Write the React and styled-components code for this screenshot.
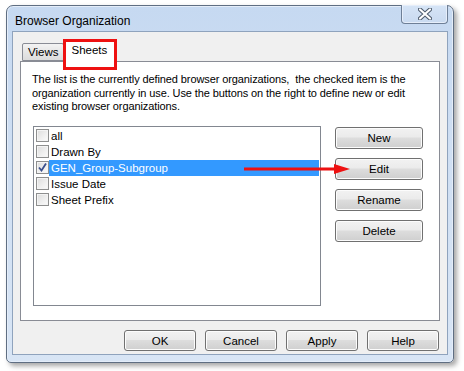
import styled, { createGlobalStyle } from "styled-components";

const GlobalStyle = createGlobalStyle`
  html, body {
    margin: 0;
    padding: 0;
    background: #ffffff;
  }
  body {
    font-family: "Liberation Sans", Arial, sans-serif;
    font-size: 11px;
    color: #000;
  }
`;

const Page = styled.div`
  width: 464px;
  height: 371px;
  padding: 5px 0 0 6px;
  box-sizing: border-box;
`;

const Window = styled.div`
  width: 448px;
  height: 358px;
  box-sizing: border-box;
  border: 1px solid #5f6e82;
  border-radius: 7px 7px 5px 5px;
  background: linear-gradient(180deg, #c6d9f1 0%, #cfdff3 40%, #d8e5f5 100%);
  box-shadow: inset 0 0 0 1px #e4edf9, 3px 3px 5px rgba(0, 0, 0, 0.35);
  display: flex;
  flex-direction: column;
  padding: 0 5px 7px 5px;
`;

const TitleBar = styled.div`
  height: 26px;
  display: flex;
  align-items: flex-start;
  justify-content: space-between;
`;

const Title = styled.div`
  font-size: 12px;
  padding: 8px 0 0 3px;
  color: #000;
`;

const CloseButton = styled.div`
  width: 47px;
  height: 19px;
  margin-top: -1px;
  box-sizing: border-box;
  border: 1px solid #6e7f96;
  border-top: none;
  border-radius: 0 0 4px 4px;
  background: linear-gradient(180deg, #d6e4f6 0%, #c9daf0 100%);
  box-shadow: inset 0 0 0 1px #e6eefa;
  display: flex;
  align-items: center;
  justify-content: center;
`;

const Client = styled.div`
  flex: 1;
  background: #f0f0f0;
  border: 1px solid #8fa3bd;
  display: flex;
  flex-direction: column;
  padding: 8px 7px 3px 7px;
`;

const TabStrip = styled.div`
  height: 21px;
  display: flex;
  align-items: flex-end;
  padding-left: 2px;
  position: relative;
  z-index: 1;
`;

const Tab = styled.div`
  position: relative;
  box-sizing: border-box;
  height: ${(p) => (p.$active ? "22px" : "18px")};
  margin-bottom: ${(p) => (p.$active ? "-1px" : "0")};
  padding: ${(p) => (p.$active ? "2px 7px 0 7px" : "1px 5px 0 5px")};
  margin-left: ${(p) => (p.$active ? "-1px" : "0")};
  border: 1px solid #898c95;
  border-bottom: ${(p) => (p.$active ? "none" : "1px solid #898c95")};
  border-radius: 2px 2px 0 0;
  background: ${(p) =>
    p.$active ? "#ffffff" : "linear-gradient(180deg, #f3f3f3 0%, #e6e6e6 50%, #dcdcdc 100%)"};
  font-size: 11.5px;
  line-height: 15px;
`;

const Highlight = styled.div`
  position: absolute;
  top: -2px;
  left: -1px;
  width: 54px;
  height: 31px;
  box-sizing: border-box;
  border: 3px solid #ee1111;
  pointer-events: none;
`;

const Panel = styled.div`
  height: 260px;
  box-sizing: border-box;
  background: #ffffff;
  border: 1px solid #898c95;
  padding: 11px 16px 0 11px;
  display: flex;
  flex-direction: column;
`;

const Intro = styled.div`
  line-height: 13.5px;
  white-space: nowrap;
  letter-spacing: -0.1px;
`;

const ContentRow = styled.div`
  margin-top: 12px;
  margin-left: 1px;
  display: flex;
  gap: 14px;
  position: relative;
`;

const ListBox = styled.div`
  width: 290px;
  height: 180px;
  box-sizing: border-box;
  border: 1px solid #828790;
  padding: 1px 1px 0 2px;
`;

const Row = styled.div`
  height: 16px;
  display: flex;
  align-items: center;
`;

const Check = styled.div`
  width: 13px;
  height: 13px;
  box-sizing: border-box;
  border: 1px solid #8e8f8f;
  background: linear-gradient(135deg, #dcdcdc 0%, #f0f0f0 60%, #fbfbfb 100%);
  box-shadow: inset 0 0 0 1px #f4f4f4;
  display: flex;
  align-items: center;
  justify-content: center;
  flex-shrink: 0;
`;

const Label = styled.div`
  flex: 1;
  height: 16px;
  line-height: 16px;
  padding-left: 2px;
  font-size: 11.5px;
  background: ${(p) => (p.$selected ? "#3399ff" : "transparent")};
  color: ${(p) => (p.$selected ? "#ffffff" : "#000")};
`;

const SideButtons = styled.div`
  display: flex;
  flex-direction: column;
  gap: 9px;
  padding-top: 1px;
`;

const Button = styled.div`
  width: ${(p) => p.$width}px;
  height: ${(p) => p.$height}px;
  box-sizing: border-box;
  border: 1px solid #707070;
  border-radius: 3px;
  background: linear-gradient(180deg, #f2f2f2 0%, #ebebeb 45%, #dddddd 50%, #cfcfcf 100%);
  box-shadow: inset 0 0 0 1px #fcfcfc;
  display: flex;
  align-items: center;
  justify-content: center;
  font-size: 11.5px;
`;

const Arrow = styled.svg`
  position: absolute;
  left: 211px;
  top: 37px;
`;

const Footer = styled.div`
  margin-top: 9px;
  display: flex;
  justify-content: flex-end;
  gap: 9px;
  padding-right: 1px;
`;

const items = [
  { name: "all" },
  { name: "Drawn By" },
  { name: "GEN_Group-Subgroup", checked: true, selected: true },
  { name: "Issue Date" },
  { name: "Sheet Prefix" },
];

function CheckMark() {
  return (
    <svg width="9" height="9" viewBox="0 0 9 9">
      <path d="M1 4.5 L3.5 7.5 L8 0.5" fill="none" stroke="#3b4f8c" strokeWidth="1.8" />
    </svg>
  );
}

export default function App() {
  return (
    <>
      <GlobalStyle />
      <Page>
        <Window>
          <TitleBar>
            <Title>Browser Organization</Title>
            <CloseButton>
              <svg width="14" height="12" viewBox="0 0 14 12">
                <path
                  d="M2 1.5 L12 10.5 M12 1.5 L2 10.5"
                  stroke="#4d5a6c"
                  strokeWidth="4.2"
                  strokeLinecap="round"
                />
                <path
                  d="M2 1.5 L12 10.5 M12 1.5 L2 10.5"
                  stroke="#ffffff"
                  strokeWidth="2.2"
                  strokeLinecap="round"
                />
              </svg>
            </CloseButton>
          </TitleBar>
          <Client>
            <TabStrip>
              <Tab>Views</Tab>
              <Tab $active>
                Sheets
                <Highlight />
              </Tab>
            </TabStrip>
            <Panel>
              <Intro>
                The list is the currently defined browser organizations,&nbsp; the checked item is the
                <br />
                organization currently in use. Use the buttons on the right to define new or edit
                <br />
                existing browser organizations.
              </Intro>
              <ContentRow>
                <ListBox>
                  {items.map((item) => (
                    <Row key={item.name}>
                      <Check>{item.checked && <CheckMark />}</Check>
                      <Label $selected={item.selected}>{item.name}</Label>
                    </Row>
                  ))}
                </ListBox>
                <SideButtons>
                  <Button $width={88} $height={22}>New</Button>
                  <Button $width={88} $height={22}>Edit</Button>
                  <Button $width={88} $height={22}>Rename</Button>
                  <Button $width={88} $height={22}>Delete</Button>
                </SideButtons>
                <Arrow width="108" height="12" viewBox="0 0 108 12">
                  <path d="M0 6 L92 6" stroke="#ee1111" strokeWidth="3" />
                  <polygon points="90,1 106,6 90,11" fill="#ee1111" />
                </Arrow>
              </ContentRow>
            </Panel>
            <Footer>
              <Button $width={72} $height={21}>OK</Button>
              <Button $width={72} $height={21}>Cancel</Button>
              <Button $width={72} $height={21}>Apply</Button>
              <Button $width={72} $height={21}>Help</Button>
            </Footer>
          </Client>
        </Window>
      </Page>
    </>
  );
}
